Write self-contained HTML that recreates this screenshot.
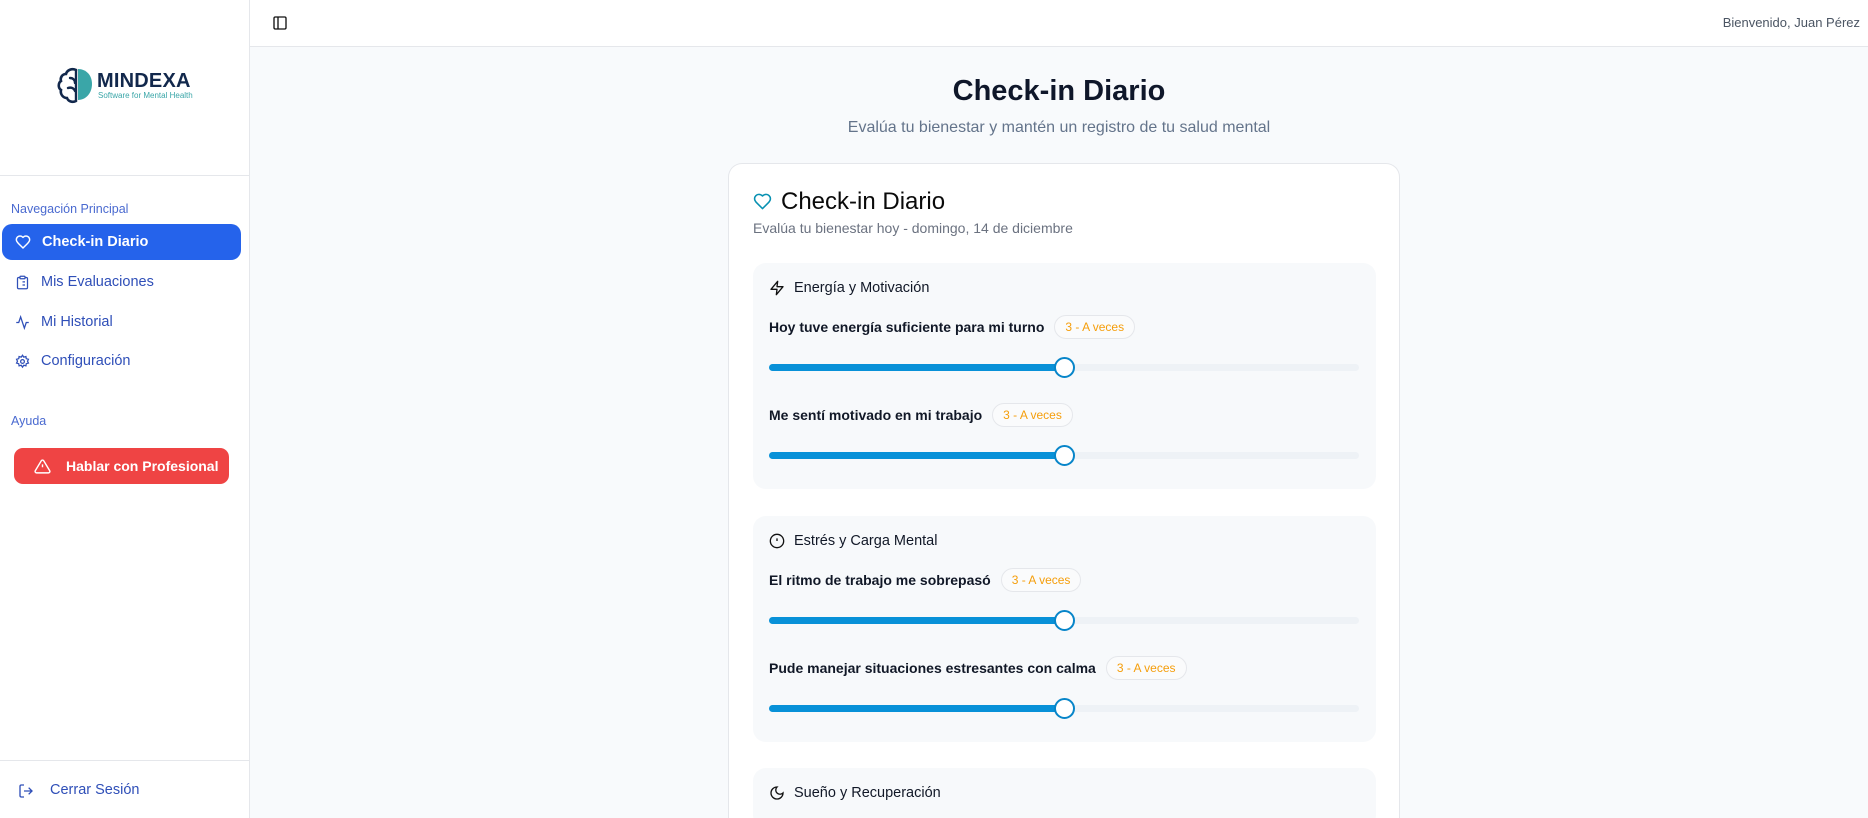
<!DOCTYPE html>
<html><head><meta charset="utf-8"><style>
*{box-sizing:border-box;margin:0;padding:0}
html,body{width:1868px;height:818px;overflow:hidden}
body{background:#f8fafc;font-family:"Liberation Sans",sans-serif}
#root{position:relative;width:1868px;height:818px;overflow:hidden}
.abs{position:absolute}
#side{left:0;top:0;width:250px;height:818px;background:#fff;border-right:1px solid #e5e7eb}
#top{left:250px;top:0;width:1618px;height:47px;background:#fff;border-bottom:1px solid #e5e7eb}
.nav{position:absolute;left:2px;width:239px;height:36px;display:flex;align-items:center;padding-left:13px;font-size:14.5px;color:#2f4fb8}
.nav svg{margin-right:11px}
.lbl{position:absolute;left:11px;font-size:12.5px;color:#4a6ad0}
.card{left:728px;top:163px;width:672px;height:655px;background:#fff;border:1px solid #e5e7eb;border-bottom:none;border-radius:14px 14px 0 0;overflow:hidden}
.sec{position:absolute;left:24px;width:623px;background:#f7f9fb;border-radius:13px}
.st{position:absolute;left:16px;display:flex;align-items:center;font-size:14.5px;color:#111827}
.st svg{margin-right:9px}
.q{position:absolute;left:16px;display:flex;align-items:center;font-size:14px;font-weight:bold;color:#111827;white-space:nowrap}
.b{margin-left:10px;height:24px;padding:0 10px;border:1px solid #e5e7eb;border-radius:12px;font-size:12px;font-weight:normal;color:#f59e0b;display:flex;align-items:center;background:#fafbfc}
.tr{position:absolute;left:16px;width:590px;height:7px;border-radius:4px;background:#eef2f6}
.tr i{position:absolute;left:0;top:0;height:7px;width:296px;border-radius:4px;background:#0891d8}
.tr b{position:absolute;left:285px;top:-7px;width:21px;height:21px;border-radius:50%;background:#fff;border:2.5px solid #0785c9}
</style></head><body><div id="root">
<div id="side" class="abs">
 <svg class="abs" style="left:57px;top:66px" width="38" height="38" viewBox="0 0 38 38">
  <path d="M21 3c8 0 14 6 14 15s-6 16-14 16z" fill="#3aa6a8"/>
  <path d="M19 4c-4-2-9 0-10 4-4 0-6 4-5 7-3 2-3 7 0 9-1 4 2 8 6 8 1 3 5 5 9 3" fill="none" stroke="#12284c" stroke-width="2.6" stroke-linecap="round"/>
  <path d="M19 4v30M13 12c3 0 5 2 5 5M11 22c3-1 6 0 7 3" fill="none" stroke="#12284c" stroke-width="2.4" stroke-linecap="round"/>
 </svg>
 <div class="abs" style="left:97px;top:70px;font-size:20px;font-weight:bold;color:#12284c;letter-spacing:0.2px">MINDEXA</div>
 <div class="abs" style="left:98px;top:91px;font-size:8px;color:#3aa6a8">Software for Mental Health</div>
 <div class="abs" style="left:0;top:175px;width:249px;height:1px;background:#e5e7eb"></div>
 <div class="lbl" style="top:202px">Navegación Principal</div>
 <div class="nav" style="top:224px;background:#2563eb;color:#fff;font-weight:bold;border-radius:10px"><svg width="16" height="16" viewBox="0 0 24 24" fill="none" stroke="#fff" stroke-width="2.2" stroke-linejoin="round"><path d="M19 14c1.5-1.5 3-3.2 3-5.5A5.5 5.5 0 0 0 16.5 3c-1.8 0-3 .5-4.5 2-1.5-1.5-2.7-2-4.5-2A5.5 5.5 0 0 0 2 8.5c0 2.3 1.5 4 3 5.5l7 7Z"/></svg>Check-in Diario</div>
 <div class="nav" style="top:264px"><svg width="15" height="15" viewBox="0 0 24 24" fill="none" stroke="#2f4fb8" stroke-width="2"><rect x="8" y="2" width="8" height="4" rx="1"/><path d="M16 4h2a2 2 0 0 1 2 2v14a2 2 0 0 1-2 2H6a2 2 0 0 1-2-2V6a2 2 0 0 1 2-2h2M12 11h4M12 16h4M8 11h.01M8 16h.01"/></svg>Mis Evaluaciones</div>
 <div class="nav" style="top:304px"><svg width="15" height="15" viewBox="0 0 24 24" fill="none" stroke="#2f4fb8" stroke-width="2"><path d="M22 12h-4l-3 9L9 3l-3 9H2"/></svg>Mi Historial</div>
 <div class="nav" style="top:343px"><svg width="15" height="15" viewBox="0 0 24 24" fill="none" stroke="#2f4fb8" stroke-width="2"><circle cx="12" cy="12" r="3"/><path d="M12 2l2 3 3.5-1 .5 3.5 3.5 1-1.5 3 1.5 3-3.5 1-.5 3.5-3.5-1-2 3-2-3-3.5 1-.5-3.5-3.5-1 1.5-3-1.5-3 3.5-1 .5-3.5 3.5 1z"/></svg>Configuración</div>
 <div class="lbl" style="top:414px">Ayuda</div>
 <div class="abs" style="left:14px;top:448px;width:215px;height:36px;background:#ef4444;border-radius:9px;color:#fff;font-weight:bold;font-size:14px;display:flex;align-items:center;padding-left:20px"><svg width="17" height="17" viewBox="0 0 24 24" fill="none" stroke="#fff" stroke-width="2"><path d="M10.3 3.9 1.8 18a2 2 0 0 0 1.7 3h17a2 2 0 0 0 1.7-3L13.7 3.9a2 2 0 0 0-3.4 0zM12 9v4M12 17h.01"/></svg><span style="margin-left:15px">Hablar con Profesional</span></div>
 <div class="abs" style="left:0;top:760px;width:249px;height:1px;background:#e5e7eb"></div>
 <svg class="abs" style="left:18px;top:783px" width="16" height="16" viewBox="0 0 24 24" fill="none" stroke="#2f4fb8" stroke-width="2"><path d="M9 21H5a2 2 0 0 1-2-2V5a2 2 0 0 1 2-2h4M16 17l5-5-5-5M21 12H9"/></svg>
 <div class="abs" style="left:50px;top:782px;font-size:14.5px;color:#2f4fb8">Cerrar Sesión</div>
</div>
<div id="top" class="abs">
 <svg class="abs" style="left:22px;top:15px" width="16" height="16" viewBox="0 0 24 24" fill="none" stroke="#111" stroke-width="2"><rect x="3" y="3" width="18" height="18" rx="2"/><path d="M9 3v18"/></svg>
 <div class="abs" style="right:8px;top:15px;font-size:13px;color:#4b5563">Bienvenido, Juan Pérez</div>
</div>
<div class="abs" style="left:250px;width:1618px;top:75px;text-align:center;font-size:29px;font-weight:bold;color:#0f172a">Check-in Diario</div>
<div class="abs" style="left:250px;width:1618px;top:119px;text-align:center;font-size:16px;color:#64748b">Evalúa tu bienestar y mantén un registro de tu salud mental</div>
<div class="card abs">
 <svg class="abs" style="left:24px;top:28px" width="19" height="19" viewBox="0 0 24 24" fill="none" stroke="#0891b2" stroke-width="2" stroke-linejoin="round"><path d="M19 14c1.5-1.5 3-3.2 3-5.5A5.5 5.5 0 0 0 16.5 3c-1.8 0-3 .5-4.5 2-1.5-1.5-2.7-2-4.5-2A5.5 5.5 0 0 0 2 8.5c0 2.3 1.5 4 3 5.5l7 7Z"/></svg>
 <div class="abs" style="left:52px;top:24px;font-size:24px;color:#0a0a0a">Check-in Diario</div>
 <div class="abs" style="left:24px;top:56px;font-size:14px;color:#6b7280">Evalúa tu bienestar hoy - domingo, 14 de diciembre</div>
 <div class="sec" style="top:99px;height:226px">
  <div class="st" style="top:17px"><svg width="16" height="16" viewBox="0 0 24 24" fill="none" stroke="#111" stroke-width="2" stroke-linejoin="round"><path d="M13 2 3 14h9l-1 8 10-12h-9z"/></svg>Energía y Motivación</div>
  <div class="q" style="top:52px">Hoy tuve energía suficiente para mi turno<span class="b">3 - A veces</span></div>
  <div class="tr" style="top:101px"><i></i><b></b></div>
  <div class="q" style="top:140px">Me sentí motivado en mi trabajo<span class="b">3 - A veces</span></div>
  <div class="tr" style="top:189px"><i></i><b></b></div>
 </div>
 <div class="sec" style="top:352px;height:226px">
  <div class="st" style="top:17px"><svg width="16" height="16" viewBox="0 0 24 24" fill="none" stroke="#111" stroke-width="2"><circle cx="12" cy="12" r="10"/><path d="M12 8v4M12 16h.01"/></svg>Estrés y Carga Mental</div>
  <div class="q" style="top:52px">El ritmo de trabajo me sobrepasó<span class="b">3 - A veces</span></div>
  <div class="tr" style="top:101px"><i></i><b></b></div>
  <div class="q" style="top:140px">Pude manejar situaciones estresantes con calma<span class="b">3 - A veces</span></div>
  <div class="tr" style="top:189px"><i></i><b></b></div>
 </div>
 <div class="sec" style="top:604px;height:60px">
  <div class="st" style="top:17px"><svg width="16" height="16" viewBox="0 0 24 24" fill="none" stroke="#111" stroke-width="2"><path d="M12 3a6 6 0 0 0 9 9 9 9 0 1 1-9-9z"/></svg>Sueño y Recuperación</div>
 </div>
</div>
</div></body></html>
